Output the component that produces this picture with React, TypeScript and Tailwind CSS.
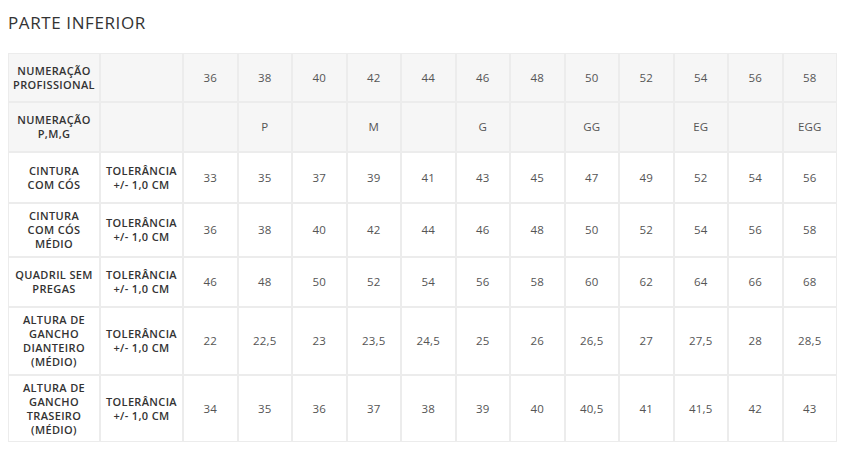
const sizes = ["36", "38", "40", "42", "44", "46", "48", "50", "52", "54", "56", "58"];
const letters = ["", "P", "", "M", "", "G", "", "GG", "", "EG", "", "EGG"];

const rows = [
  { label: ["CINTURA", "COM CÓS"], h: "h-[51px]", values: ["33", "35", "37", "39", "41", "43", "45", "47", "49", "52", "54", "56"] },
  { label: ["CINTURA", "COM CÓS", "MÉDIO"], h: "h-[54px]", values: ["36", "38", "40", "42", "44", "46", "48", "50", "52", "54", "56", "58"] },
  { label: ["QUADRIL SEM", "PREGAS"], h: "h-[50px]", values: ["46", "48", "50", "52", "54", "56", "58", "60", "62", "64", "66", "68"] },
  { label: ["ALTURA DE", "GANCHO", "DIANTEIRO", "(MÉDIO)"], h: "h-[68px]", values: ["22", "22,5", "23", "23,5", "24,5", "25", "26", "26,5", "27", "27,5", "28", "28,5"] },
  { label: ["ALTURA DE", "GANCHO", "TRASEIRO", "(MÉDIO)"], h: "h-[67px]", values: ["34", "35", "36", "37", "38", "39", "40", "40,5", "41", "41,5", "42", "43"] },
];

const cell = "border border-[#ececec] text-center align-middle p-0";
const labelText = "text-[11px] leading-[14px] font-semibold text-[#333] tracking-[0.35px]";
const numText = "text-[11.5px] text-[#555] tracking-[0.2px]";

function Label({ lines }: { lines: string[] }) {
  return (
    <div className={labelText}>
      {lines.map((l) => (
        <div key={l}>{l}</div>
      ))}
    </div>
  );
}

export default function App() {
  return (
    <div className="w-[843px] h-[449px] bg-white px-2 pt-[12px] font-['Open_Sans',sans-serif]">
      <h2 className="text-[17px] leading-[22px] text-[#333] font-normal tracking-[0.6px]">PARTE INFERIOR</h2>

      <table className="mt-[19px] w-[829px] table-fixed border-separate border-spacing-0">
        <colgroup>
          <col className="w-[92px]" />
          <col className="w-[83px]" />
          {sizes.map((s) => (
            <col key={s} />
          ))}
        </colgroup>
        <tbody>
          <tr className="h-[49px] bg-[#f6f6f6]">
            <td className={cell}>
              <Label lines={["NUMERAÇÃO", "PROFISSIONAL"]} />
            </td>
            <td className={cell}></td>
            {sizes.map((s) => (
              <td key={s} className={`${cell} ${numText}`}>{s}</td>
            ))}
          </tr>
          <tr className="h-[50px] bg-[#f6f6f6]">
            <td className={cell}>
              <Label lines={["NUMERAÇÃO", "P,M,G"]} />
            </td>
            <td className={cell}></td>
            {letters.map((s, i) => (
              <td key={i} className={`${cell} ${numText}`}>{s}</td>
            ))}
          </tr>
          {rows.map((r) => (
            <tr key={r.label.join(" ") + r.values[0]} className={r.h}>
              <td className={cell}>
                <Label lines={r.label} />
              </td>
              <td className={cell}>
                <Label lines={["TOLERÂNCIA", "+/- 1,0 CM"]} />
              </td>
              {r.values.map((v, i) => (
                <td key={i} className={`${cell} ${numText}`}>{v}</td>
              ))}
            </tr>
          ))}
        </tbody>
      </table>
    </div>
  );
}
